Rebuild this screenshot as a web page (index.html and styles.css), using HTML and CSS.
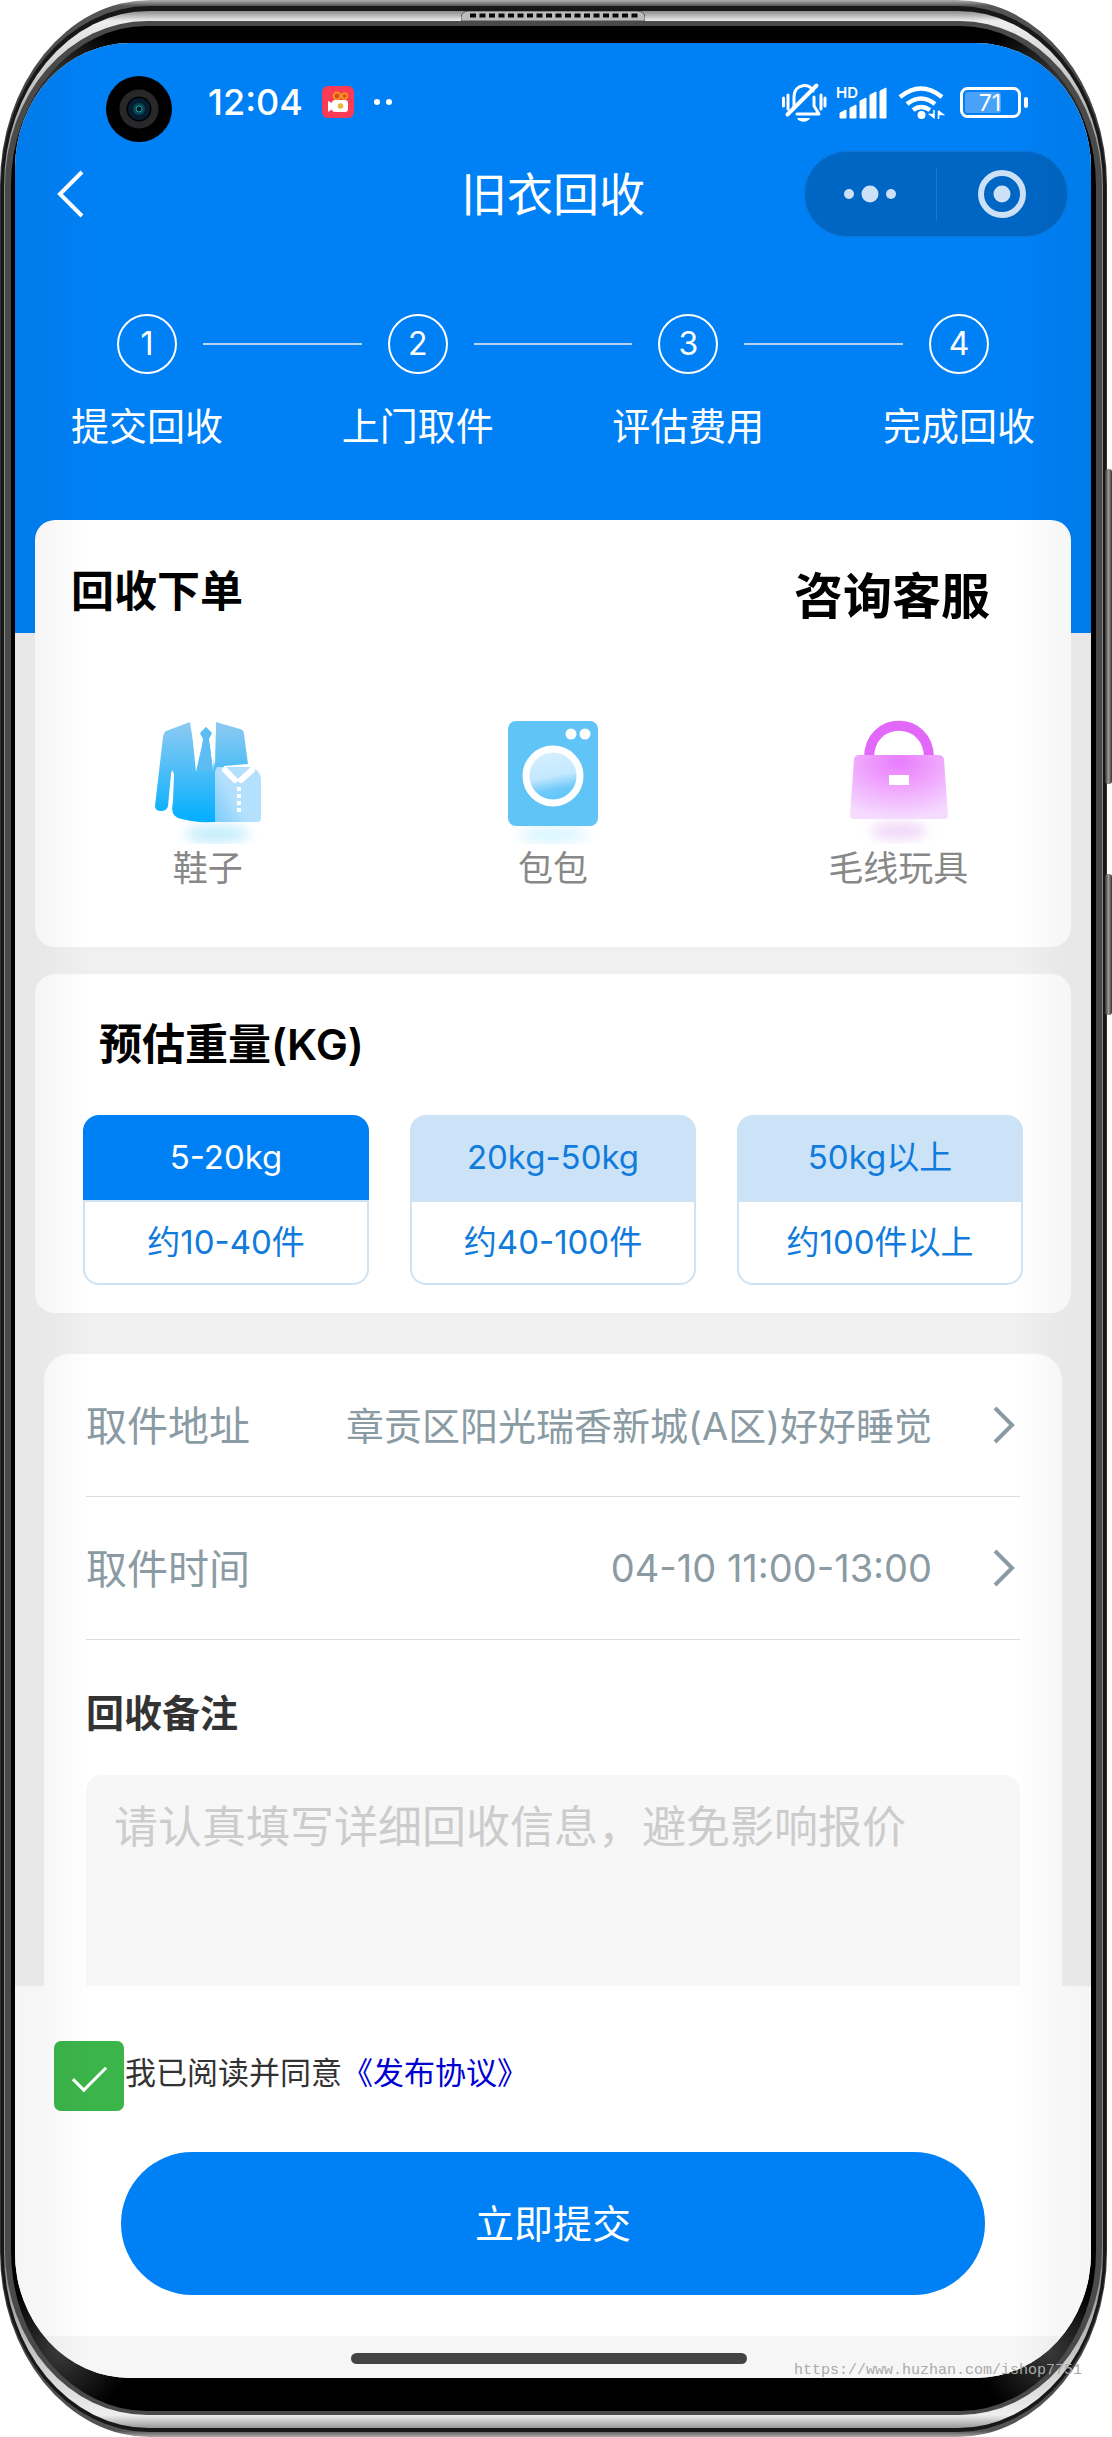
FILE: index.html
```html
<!DOCTYPE html>
<html lang="zh-CN">
<head>
<meta charset="utf-8">
<meta name="viewport" content="width=device-width, initial-scale=1">
<title>旧衣回收</title>
<link rel="stylesheet" href="styles.css">
</head>
<body>
<div class="phone">
  <span class="side-key side-key-volume"></span>
  <span class="side-key side-key-power"></span>
  <div class="rim rim-edge"><div class="rim rim-dark"><div class="rim rim-silver"><div class="rim rim-grey"><div class="rim rim-black">
  <div class="screen">
    <header class="hero">
      <div class="status">
        <span class="status-left">
          <time>12:04</time>
          <svg class="app-icon" width="32" height="32" viewBox="0 0 32 32" aria-hidden="true">
            <rect width="32" height="32" rx="6" fill="#fb3a55"/>
            <circle cx="15" cy="10" r="3.4" fill="#d94a1c" stroke="#f5921e" stroke-width="2"/>
            <circle cx="22.500" cy="10" r="2.800" fill="#d94a1c" stroke="#f5921e" stroke-width="2"/>
            <rect x="10" y="14" width="16" height="12" rx="3" fill="#fff"/>
            <path d="M6 15l6 3v4l-6 4z" fill="#fff"/>
            <circle cx="18.500" cy="20" r="2.800" fill="#e8b63a"/>
          </svg>
          <svg width="20" height="8" viewBox="0 0 20 8" aria-hidden="true"><circle cx="4" cy="4" r="3" fill="#fff"/><circle cx="16" cy="4" r="3" fill="#fff"/></svg>
        </span>
        <svg class="status-icons" width="250" height="40" viewBox="780 82 250 40" aria-hidden="true">
          <g fill="none" stroke="#fff" stroke-width="3" stroke-linecap="round">
            <path d="M783.500 98v8M788 95v14M821 95v14M825 98v8"/>
            <path d="M794 107v-10c0-14 17-14 19-6M814 97v9l5 8h-22" stroke-linejoin="round"/>
            <path d="M787.500 114.500l29-29" stroke-width="4"/>
          </g>
          <path d="M797 118h13c-2 5-11 5-13 0z" fill="#fff"/>
          <text x="836" y="98" class="hd">HD</text>
          <path d="M840 113l6-3v8h-6zM850 108l6-3v13h-6zM860 101l6-3v20h-6zM870 95l6-3v26h-6zM880 91l6-3v30h-6z" fill="#fff" stroke="#fff" stroke-width="1" stroke-linejoin="round"/>
          <g fill="none" stroke="#fff" stroke-width="4.500">
            <path d="M900 97q21-17 42 0M907 104q14-11 28 0M913 110q8-6 17 0"/>
          </g>
          <circle cx="921.500" cy="115" r="4" fill="#fff"/>
          <path d="M930 114.500h4v3zM934 110v8M938.500 119v-8M943 114.500h-4v-3z" fill="#fff" stroke="#fff" stroke-width="1.500"/>
          <rect x="961.500" y="88.500" width="58" height="28" rx="6" fill="none" stroke="#fff" stroke-width="3"/>
          <rect x="965" y="92" width="36" height="21" rx="3" fill="#4aa2f8"/>
          <text x="990" y="111" text-anchor="middle" class="battery">71</text>
          <rect x="1024" y="97" width="4" height="11" rx="2" fill="#fff"/>
        </svg>
      </div>
      <nav class="navbar">
        <button class="back" type="button" aria-label="返回">
          <svg width="28" height="48" viewBox="0 0 28 48"><path d="M25 2L3 24l22 22" fill="none" stroke="#fff" stroke-width="4"/></svg>
        </button>
        <h1>旧衣回收</h1>
        <div class="capsule">
          <button type="button" aria-label="更多"><svg width="56" height="20" viewBox="0 0 56 20" fill="#cce0f6"><circle cx="7" cy="10" r="5"/><circle cx="28" cy="10" r="8.500"/><circle cx="49" cy="10" r="5"/></svg></button>
          <button type="button" aria-label="关闭"><svg width="50" height="50" viewBox="0 0 50 50"><circle cx="25" cy="25" r="21" fill="none" stroke="#cce0f6" stroke-width="6"/><circle cx="25" cy="25" r="8.500" fill="#cce0f6"/></svg></button>
        </div>
      </nav>
      <div class="track">
        <span class="dot">1</span><span class="bar"></span>
        <span class="dot">2</span><span class="bar"></span>
        <span class="dot">3</span><span class="bar"></span>
        <span class="dot">4</span>
      </div>
      <div class="track-labels">
        <span>提交回收</span><span>上门取件</span><span>评估费用</span><span>完成回收</span>
      </div>
    </header>

    <main class="content">
      <section class="card">
        <div class="card-head">
          <h2>回收下单</h2>
          <a class="service" href="#service">咨询客服</a>
        </div>
        <div class="kinds">
          <button class="kind" type="button">
            <svg width="120" height="128" viewBox="0 0 120 128" aria-hidden="true">
              <defs>
                <linearGradient id="suit" x1="0" y1="0" x2="0" y2="1"><stop offset="0" stop-color="#8ecaf2"/><stop offset=".5" stop-color="#4abdf7"/><stop offset="1" stop-color="#00aeff"/></linearGradient>
                <linearGradient id="shirt" x1="0" y1="1" x2="1" y2=".3"><stop offset="0" stop-color="#7acbfb"/><stop offset=".5" stop-color="#b4e0fd"/><stop offset="1" stop-color="#b2e0fd"/></linearGradient>
                <filter id="soft" x="-30%" y="-60%" width="160%" height="220%"><feGaussianBlur stdDeviation="6"/></filter>
              </defs>
              <ellipse cx="69" cy="118" rx="32" ry="9" fill="#c5edfd" filter="url(#soft)"/>
              <path d="M42 6L18 15q-2 1-3 6L7 90q0 5 6 5 6 0 7-5l3-32q1-7 3 0l-1 28q-3 13 5 16 16 5 34 4h12V50l24-2-4-30q0-4-4-5L68 6l-1 44-7-29 3-5-5-5-5 5 3 5-7 28z" fill="url(#suit)"/>
              <path d="M43 6l5 50 7-33-3-6 6-6 6 6-3 6 4 33 3-50h-2l-1 30-6-28-6 0-5 28-3-30z" fill="#fff"/>
              <path d="M58 11l6 6-3 6 4 32H51l4-32-3-6z" fill="#5bbdf3"/>
              <path d="M69 51h35q9 5 9 12v39q0 4-4 4H67V55z" fill="url(#shirt)"/>
              <path d="M77 54l10 10M104 54L93 64" stroke="#fff" stroke-width="6" stroke-linecap="round"/>
              <path d="M91 71v27" stroke="#fff" stroke-width="4" stroke-dasharray="4 3"/>
            </svg>
            <span>鞋子</span>
          </button>
          <button class="kind" type="button">
            <svg width="120" height="128" viewBox="0 0 120 128" aria-hidden="true">
              <defs><linearGradient id="drum" x1=".4" y1="0" x2=".6" y2="1"><stop offset="0" stop-color="#d8f0ff"/><stop offset=".5" stop-color="#c4e8ff"/><stop offset=".75" stop-color="#6fcaf9"/><stop offset="1" stop-color="#5cc2f7"/></linearGradient></defs>
              <ellipse cx="60" cy="119" rx="34" ry="8" fill="#d8f5ff" filter="url(#soft)"/>
              <rect x="15" y="5" width="90" height="105" rx="8" fill="#60c4f7"/>
              <circle cx="78" cy="18" r="5.500" fill="#fff"/><circle cx="92" cy="18" r="5.500" fill="#fff"/>
              <circle cx="60" cy="60" r="27" fill="url(#drum)" stroke="#fff" stroke-width="7"/>
            </svg>
            <span>包包</span>
          </button>
          <button class="kind" type="button">
            <svg width="120" height="128" viewBox="0 0 120 128" aria-hidden="true">
              <defs><radialGradient id="bag" cx=".5" cy=".1" r=".9"><stop offset="0" stop-color="#e87cfd"/><stop offset=".4" stop-color="#efa0fd"/><stop offset="1" stop-color="#f5dcff"/></radialGradient></defs>
              <ellipse cx="61" cy="115" rx="28" ry="9" fill="#f0d8f8" filter="url(#soft)"/>
              <path d="M31 42C31-1 91-1 91 42" fill="none" stroke="#e268fa" stroke-width="10"/>
              <path d="M21 39h80q4 0 5 4l4 56q0 4-4 4H16q-4 0-4-4l4-56q1-4 5-4z" fill="url(#bag)"/>
              <rect x="51" y="59" width="20" height="10" fill="#fff"/>
            </svg>
            <span>毛线玩具</span>
          </button>
        </div>
      </section>

      <section class="card weight">
        <h2>预估重量(KG)</h2>
        <div class="options" role="radiogroup" aria-label="预估重量(KG)">
          <label class="option"><input type="radio" name="weight" checked><span class="range">5-20kg</span><span class="pieces">约10-40件</span></label>
          <label class="option"><input type="radio" name="weight"><span class="range">20kg-50kg</span><span class="pieces">约40-100件</span></label>
          <label class="option"><input type="radio" name="weight"><span class="range">50kg以上</span><span class="pieces">约100件以上</span></label>
        </div>
      </section>

      <section class="details">
        <a class="row" href="#address">
          <span class="row-name">取件地址</span><span class="row-value">章贡区阳光瑞香新城(A区)好好睡觉</span>
          <svg width="24" height="40" viewBox="0 0 24 40" aria-hidden="true"><path d="M3 3l17 17L3 37" fill="none" stroke="#8a9ba3" stroke-width="4"/></svg>
        </a>
        <a class="row" href="#time">
          <span class="row-name">取件时间</span><span class="row-value row-time">04-10 11:00-13:00</span>
          <svg width="24" height="40" viewBox="0 0 24 40" aria-hidden="true"><path d="M3 3l17 17L3 37" fill="none" stroke="#8a9ba3" stroke-width="4"/></svg>
        </a>
        <label class="note-label" for="note">回收备注</label>
        <textarea id="note" class="note" placeholder="请认真填写详细回收信息，避免影响报价"></textarea>
      </section>
    </main>

    <footer class="footer">
      <div class="agree">
        <input type="checkbox" id="agree" checked>
        <span><label for="agree">我已阅读并同意</label><a href="#terms">《发布协议》</a></span>
      </div>
      <button class="submit" type="submit">立即提交</button>
    </footer>
    <div class="home"><span></span></div>
    <svg class="camera" width="66" height="66" viewBox="0 0 66 66" aria-hidden="true">
      <circle cx="33" cy="33" r="33" fill="#000"/><circle cx="33" cy="33" r="16" fill="none" stroke="#28282b" stroke-width="7"/>
      <circle cx="33" cy="33" r="11" fill="#061c30"/><circle cx="33" cy="33" r="6" fill="#084754"/><circle cx="33" cy="33" r="3" fill="#021018" stroke="#1fa0a8" stroke-width="1"/>
    </svg>
  </div>
  </div></div></div></div></div>
  <svg class="speaker" width="184" height="10" viewBox="0 0 184 10" aria-hidden="true">
    <path d="M0 10V6Q1 0 8 0H176q7 0 8 6v4z" fill="#bbb" stroke="#555" stroke-width="1"/>
    <path d="M9 4.500H178" stroke="#080808" stroke-width="4" stroke-dasharray="6 3.500"/>
  </svg>
  <span class="watermark">https://www.huzhan.com/ishop7751</span>
</div>
</body>
</html>
```
FILE: styles.css
```css
:root {
  --blue: #0080f5;
  --pale: #cbe2f7;
  --slate: #8a9ba3;
}

* { box-sizing: border-box; }

body {
  margin: 0;
  background: #fff;
  font-family: Inter, "Noto Sans CJK SC", sans-serif;
  font-size: 38px;
  color: #000;
}

h1, h2 { margin: 0; font-weight: 400; }
h2 { font-size: 43px; line-height: 60px; font-weight: 600; }
a { color: inherit; text-decoration: none; }
button { padding: 0; border: 0; background: none; font: inherit; color: inherit; cursor: pointer; }
svg { display: block; flex: none; }

/* Phone body: nested rims, from the outer edge to the glass */
.phone { position: relative; padding-right: 5px; }
.rim-edge {
  padding: 6px 1px 5px;
  border-radius: 150px / 185px;
  background: linear-gradient(#b0b0b0, #555 6px, #333 200px, #333 calc(100% - 200px), #555 calc(100% - 6px), #aaa);
}
.rim-dark { padding: 5px 3px 4px; border-radius: 148px / 180px; background: #181818; }
.rim-silver {
  padding: 10px 1px 13px;
  border-radius: 145px / 175px;
  background: linear-gradient(#8a8a8a, #eee 10px, #888 170px, #888 calc(100% - 170px), #eee calc(100% - 13px), #999);
}
.rim-grey { padding: 5px 6px 4px; border-radius: 142px / 165px; background: #4a4a4a; }
.rim-black {
  padding: 17px 5px 33px 4px;
  border-radius: 136px / 160px;
  background:
    radial-gradient(circle at 48px 60px, #3a3a3a, transparent 70px),
    radial-gradient(circle at calc(100% - 48px) 60px, #3a3a3a, transparent 70px),
    radial-gradient(circle at 48px calc(100% - 60px), #3a3a3a, transparent 70px),
    radial-gradient(circle at calc(100% - 48px) calc(100% - 60px), #3a3a3a, transparent 70px),
    #000;
}
.side-key { position: absolute; right: 0; width: 7px; border-radius: 3px; background: linear-gradient(90deg, #333, #999, #333); }
.side-key-volume { top: 469px; height: 315px; }
.side-key-power { top: 874px; height: 141px; }
.speaker { position: absolute; top: 11px; left: calc(50% - 95px); }
.watermark {
  position: absolute;
  right: 30px;
  bottom: 56px;
  font: 15px/20px "Liberation Mono", monospace;
  color: #aaa;
}

.screen { position: relative; overflow: hidden; border-radius: 115px / 125px; background: #fff; }
.screen::after {
  content: "";
  position: absolute;
  inset: 0;
  pointer-events: none;
  background: linear-gradient(90deg, rgba(0, 0, 0, .04), rgba(0, 0, 0, .03) 32px, transparent 76px, transparent calc(100% - 76px), rgba(0, 0, 0, .03) calc(100% - 32px), rgba(0, 0, 0, .04));
}
.camera { position: absolute; top: 33px; left: 91px; }

/* Header */
.hero { padding-bottom: 65px; background: var(--blue); color: #fff; }
.status {
  display: flex;
  align-items: center;
  justify-content: space-between;
  height: 108px;
  padding: 10px 61px 0 193px;
}
.status-left { display: flex; align-items: center; gap: 19px; }
.status time { font-weight: 500; }
.status time { font-size: 36px; }
.hd { font-size: 15px; font-weight: 600; fill: #fff; }
.battery { font-size: 23px; fill: #fff; }

.navbar { display: grid; grid-template-columns: 1fr auto 1fr; align-items: center; padding: 0 23px; }
.navbar h1 { font-size: 46px; line-height: 64px; }
.back { justify-self: start; padding-left: 19px; }
.capsule {
  display: flex;
  align-items: center;
  justify-self: end;
  width: 264px;
  height: 86px;
  border: 1px solid #0f74d2;
  border-radius: 43px;
  background: #0066c4;
}
.capsule button { display: flex; flex: 1; align-items: center; justify-content: center; height: 52px; }
.capsule button + button { border-left: 1px solid #1f78cd; }

.track { display: flex; align-items: center; padding: 77px 102px 0; }
.dot {
  width: 60px;
  height: 60px;
  border: 2px solid #fff;
  border-radius: 50%;
  font-size: 32px;
  line-height: 56px;
  text-align: center;
}
.bar { flex: 1; height: 2px; margin: 0 26px; background: #b5d3f3; }
.track-labels { display: flex; justify-content: space-between; padding: 24px 56px 1px; line-height: 56px; }

/* Cards */
.content { padding: 0 20px; background: linear-gradient(var(--blue) 113px, #f0f0f0 113px); }
.card { border-radius: 20px; background: #fff; }
.card-head { display: flex; align-items: flex-start; justify-content: space-between; padding: 41px 81px 0 36px; }
.service { font-size: 49px; line-height: 72px; font-weight: 600; }
.kinds { display: grid; grid-template-columns: repeat(3, 1fr); padding: 83px 0 55px; }
.kind { display: flex; flex-direction: column; align-items: center; font-size: 35px; line-height: 48px; color: #888; }

.weight { margin-top: 27px; padding: 40px 48px 28px; }
.weight h2 { padding-left: 16px; }
.options { display: grid; grid-template-columns: repeat(3, 1fr); gap: 41px; margin-top: 41px; }
.option { display: block; position: relative; font-size: 33px; text-align: center; color: #107bdc; cursor: pointer; }
.option input { position: absolute; inset: 0; width: 100%; height: 100%; margin: 0; opacity: 0; }
.range, .pieces { display: block; height: 85px; line-height: 85px; }
.range { border-radius: 16px 16px 0 0; background: var(--pale); }
.pieces { border: 2px solid #cfe3f2; border-radius: 0 0 16px 16px; line-height: 80px; }
.option input:checked + .range { background: var(--blue); color: #fff; }

.details { margin: 41px 9px 0; padding: 0 42px; border-radius: 26px 26px 0 0; background: #fff; }
.row { display: flex; align-items: center; height: 143px; padding-right: 4px; border-bottom: 1px solid #dcdcdc; color: var(--slate); }
.row-name { padding-bottom: 4px; font-size: 41px; }
.row-value { margin: 0 60px 0 auto; padding-bottom: 4px; }
.row-time { padding-bottom: 0; }
.note-label { display: block; padding: 45px 0 34px; line-height: 56px; font-weight: 600; color: #333; }
.note {
  display: block;
  width: 100%;
  height: 211px;
  padding: 20px 28px;
  border: 0;
  border-radius: 16px 16px 0 0;
  resize: none;
  background: #f7f7f7;
  font: 44px/64px Inter, "Noto Sans CJK SC", sans-serif;
}
.note::placeholder { color: #ccc; opacity: 1; }

/* Footer */
.footer { padding: 55px 106px 41px; background: #fff; }
.agree { display: flex; align-items: flex-start; margin-left: -67px; font-size: 31px; line-height: 64px; color: #333; }
.agree input {
  appearance: none;
  flex: none;
  width: 70px;
  height: 70px;
  margin: 0 1px 0 0;
  border-radius: 7px;
  background: #3bb44a;
}
.agree input:checked::before {
  content: "";
  display: block;
  width: 14px;
  height: 30px;
  margin: 17px 0 0 27px;
  border: solid #fff;
  border-width: 0 3px 3px 0;
  transform: rotate(45deg);
}
.agree a { color: #0000d0; }
.submit { display: block; width: 100%; margin-top: 41px; border-radius: 72px; background: var(--blue); font-size: 39px; line-height: 143px; color: #fff; }
.home { padding: 17px 8px 14px 0; background: #f6f6f6; }
.home span { display: block; width: 37%; height: 11px; margin: 0 auto; border-radius: 6px; background: #444; }
```
